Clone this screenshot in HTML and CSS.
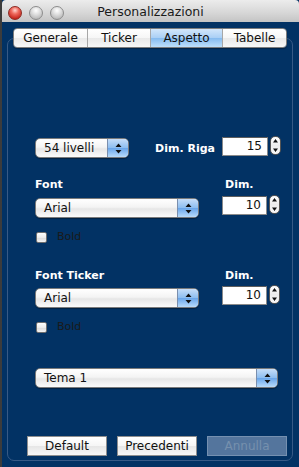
FILE: index.html
```html
<!DOCTYPE html>
<html>
<head>
<meta charset="utf-8">
<link rel="stylesheet" href="styles.css">
</head>
<body>
<div class="win">
  <div class="titlebar">
    <div class="lights">
      <span class="light red"></span>
      <span class="light"></span>
      <span class="light"></span>
    </div>
    <div class="title">Personalizzazioni</div>
    <div></div>
  </div>
  <div class="content">
    <div class="tabs">
      <div class="tab tab-gen">Generale</div>
      <div class="tab tab-tic">Ticker</div>
      <div class="tab tab-asp sel">Aspetto</div>
      <div class="tab tab-tab">Tabelle</div>
    </div>
    <div class="pane">
      <div class="row1">
        <div class="popup pop-liv"><span class="ptext">54 livelli</span><span class="parrow"><svg width="7" height="11" viewBox="0 0 7 11"><path d="M3.5 0.5 L6.5 4 L0.5 4 Z M0.5 7 L6.5 7 L3.5 10.5 Z" fill="#111"/></svg></span></div>
        <div class="rgrp">
          <span class="lbl">Dim. Riga</span>
          <div class="field f-riga">15</div>
          <div class="stepper"><svg width="11" height="19" viewBox="0 0 11 19"><path d="M5.5 3 L8 6.5 L3 6.5 Z M3 12.5 L8 12.5 L5.5 16 Z" fill="#111"/></svg></div>
        </div>
      </div>

      <div class="ghead g1"><span class="lbl">Font</span><span class="lbl dimlbl">Dim.</span></div>
      <div class="gctrl c1">
        <div class="popup pop-font"><span class="ptext">Arial</span><span class="parrow"><svg width="7" height="11" viewBox="0 0 7 11"><path d="M3.5 0.5 L6.5 4 L0.5 4 Z M0.5 7 L6.5 7 L3.5 10.5 Z" fill="#111"/></svg></span></div>
        <div class="rnum">
          <div class="field">10</div>
          <div class="stepper"><svg width="11" height="19" viewBox="0 0 11 19"><path d="M5.5 3 L8 6.5 L3 6.5 Z M3 12.5 L8 12.5 L5.5 16 Z" fill="#111"/></svg></div>
        </div>
      </div>
      <div class="chk k1"><span class="box"></span><span class="chklbl">Bold</span></div>

      <div class="ghead g2"><span class="lbl">Font Ticker</span><span class="lbl dimlbl">Dim.</span></div>
      <div class="gctrl c2">
        <div class="popup pop-font"><span class="ptext">Arial</span><span class="parrow"><svg width="7" height="11" viewBox="0 0 7 11"><path d="M3.5 0.5 L6.5 4 L0.5 4 Z M0.5 7 L6.5 7 L3.5 10.5 Z" fill="#111"/></svg></span></div>
        <div class="rnum">
          <div class="field">10</div>
          <div class="stepper"><svg width="11" height="19" viewBox="0 0 11 19"><path d="M5.5 3 L8 6.5 L3 6.5 Z M3 12.5 L8 12.5 L5.5 16 Z" fill="#111"/></svg></div>
        </div>
      </div>
      <div class="chk k2"><span class="box"></span><span class="chklbl">Bold</span></div>

      <div class="popup pop-tema"><span class="ptext">Tema 1</span><span class="parrow"><svg width="7" height="11" viewBox="0 0 7 11"><path d="M3.5 0.5 L6.5 4 L0.5 4 Z M0.5 7 L6.5 7 L3.5 10.5 Z" fill="#111"/></svg></span></div>

      <div class="buttons">
        <div class="btn">Default</div>
        <div class="btn">Precedenti</div>
        <div class="btn disabled">Annulla</div>
      </div>
    </div>
  </div>
</div>
</body>
</html>
```

FILE: styles.css
```css
html, body {
  margin: 0;
  padding: 0;
}
body {
  width: 299px;
  height: 467px;
  overflow: hidden;
  background: linear-gradient(90deg, #3c3c3c, #5a5a5a);
  font-family: "DejaVu Sans", sans-serif;
}
.win {
  margin-left: 2px;
  width: 297px;
  height: 467px;
  background: #023264;
  display: flex;
  flex-direction: column;
}
.titlebar {
  height: 22px;
  flex: none;
  display: grid;
  grid-template-columns: 1fr auto 1fr;
  align-items: center;
  background: linear-gradient(#ececec, #d6d6d6 60%, #c4c4c4);
  border-top-left-radius: 4px;
  border-top-right-radius: 4px;
}
.lights {
  display: flex;
  gap: 7px;
  padding-left: 6px;
  padding-top: 3px;
}
.light {
  width: 14px;
  height: 14px;
  border-radius: 50%;
  box-sizing: border-box;
  border: 1px solid #8d8d8d;
  background: radial-gradient(circle at 50% 30%, #ffffff 0, #e2e2e2 35%, #b9b9b9 80%, #cfcfcf 100%);
}
.light.red {
  border-color: #8c2a22;
  background: radial-gradient(circle at 50% 28%, #ffd5cf 0, #ef6a5e 35%, #c4231a 80%, #e0554a 100%);
}
.title {
  font-size: 12.5px;
  color: #1a1a1a;
  padding-top: 1px;
}
.content {
  display: flex;
  flex-direction: column;
}
.tabs {
  margin-top: 6px;
  margin-left: 11px;
  width: 274px;
  height: 20px;
  display: flex;
  position: relative;
  z-index: 1;
  box-sizing: border-box;
  border: 1px solid #7d7d7d;
  border-radius: 4px;
  overflow: hidden;
  box-shadow: 0 1px 1px rgba(0,0,0,0.3);
}
.tab {
  height: 18px;
  line-height: 18px;
  font-size: 12px;
  color: #111;
  text-align: center;
  background: linear-gradient(#ffffff, #f6f6f6 50%, #e9e9e9 52%, #f7f7f7);
  border-right: 1px solid #a7a7a7;
  box-sizing: border-box;
}
.tab:last-child { border-right: none; }
.tab-gen { width: 74px; }
.tab-tic { width: 63px; }
.tab-asp { width: 72px; }
.tab-tab { flex: 1; }
.tab.sel {
  background: linear-gradient(#d2e6fb, #a9cff5 50%, #86bbef 52%, #bfe0fb);
}
.pane {
  margin-top: -10px;
  margin-left: 5px;
  width: 286px;
  height: 423px;
  box-sizing: border-box;
  border: 1px solid #375a86;
  border-radius: 7px;
  padding: 98px 12px 0 27px;
  display: flex;
  flex-direction: column;
  align-items: flex-start;
}
.lbl {
  font-size: 11px;
  line-height: 13px;
  font-weight: bold;
  color: #ffffff;
}
.row1 {
  width: 246px;
  height: 21px;
  display: flex;
  justify-content: space-between;
  align-items: flex-start;
}
.popup {
  height: 20px;
  box-sizing: border-box;
  border: 1px solid #7b7b7b;
  border-radius: 5px;
  display: flex;
  overflow: hidden;
  background: linear-gradient(#ffffff, #f4f4f4 45%, #e6e6e6 55%, #fbfbfb);
  box-shadow: 0 1px 1px rgba(0,0,0,0.35);
}
.ptext {
  flex: 1;
  font-size: 12px;
  line-height: 18px;
  padding-left: 8px;
  color: #111;
}
.parrow {
  width: 20px;
  display: flex;
  align-items: center;
  justify-content: center;
  border-left: 1px solid #7a8fae;
  background: linear-gradient(#c7def8, #8ebef0 48%, #6aa6ea 52%, #b9dcfb);
}
.pop-liv { width: 94px; margin-top: 1px; }
.pop-font { width: 164px; margin-top: 2px; }
.pop-tema { width: 243px; margin-top: 35px; }
.rgrp {
  display: flex;
  align-items: flex-start;
}
.rgrp .lbl {
  margin-top: 5px;
  margin-right: 7px;
}
.field {
  width: 45px;
  height: 19px;
  box-sizing: border-box;
  background: #ffffff;
  border: 1px solid #8a8a8a;
  border-top-color: #5d5d5d;
  font-size: 12px;
  line-height: 17px;
  text-align: right;
  padding-right: 5px;
  color: #111;
}
.stepper {
  width: 11px;
  height: 19px;
  margin-left: 2px;
  margin-top: -1px;
  box-sizing: border-box;
  border: 1px solid #555;
  border-radius: 5px;
  background: linear-gradient(#ffffff, #ececec 50%, #f8f8f8);
  display: flex;
  align-items: center;
  justify-content: center;
  overflow: hidden;
}
.stepper svg { flex: none; }
.f-riga { width: 46px; }
.ghead {
  width: 245px;
  display: flex;
  justify-content: space-between;
}
.dimlbl {
  width: 55px;
}
.g1 { margin-top: 20px; }
.g2 { margin-top: 26px; }
.gctrl {
  width: 245px;
  height: 22px;
  display: flex;
  justify-content: space-between;
  align-items: flex-start;
}
.c1 { margin-top: 5px; }
.c2 { margin-top: 4px; }
.rnum {
  display: flex;
  align-items: flex-start;
}
.chk {
  height: 13px;
  display: flex;
  align-items: center;
  margin-top: 12px;
}
.box {
  width: 11px;
  height: 11px;
  margin-left: 1px;
  margin-top: 2px;
  box-sizing: border-box;
  border: 1px solid #6f6f6f;
  border-radius: 2px;
  background: linear-gradient(#ffffff, #ececec 50%, #dadada 52%, #f5f5f5);
}
.chklbl {
  font-size: 11px;
  line-height: 13px;
  color: #1a1a1a;
  margin-left: 10px;
}
.buttons {
  margin-top: 48px;
  margin-left: -8px;
  display: flex;
  gap: 10px;
}
.btn {
  width: 80px;
  height: 20px;
  box-sizing: border-box;
  border: 1px solid #8e8e8e;
  background: linear-gradient(#ffffff, #f5f5f5 50%, #e6e6e6 52%, #f7f7f7);
  font-size: 12px;
  line-height: 18px;
  text-align: center;
  color: #111;
}
.btn.disabled {
  background: #54759d;
  border-color: #7590b0;
  color: #7690ad;
}
```
